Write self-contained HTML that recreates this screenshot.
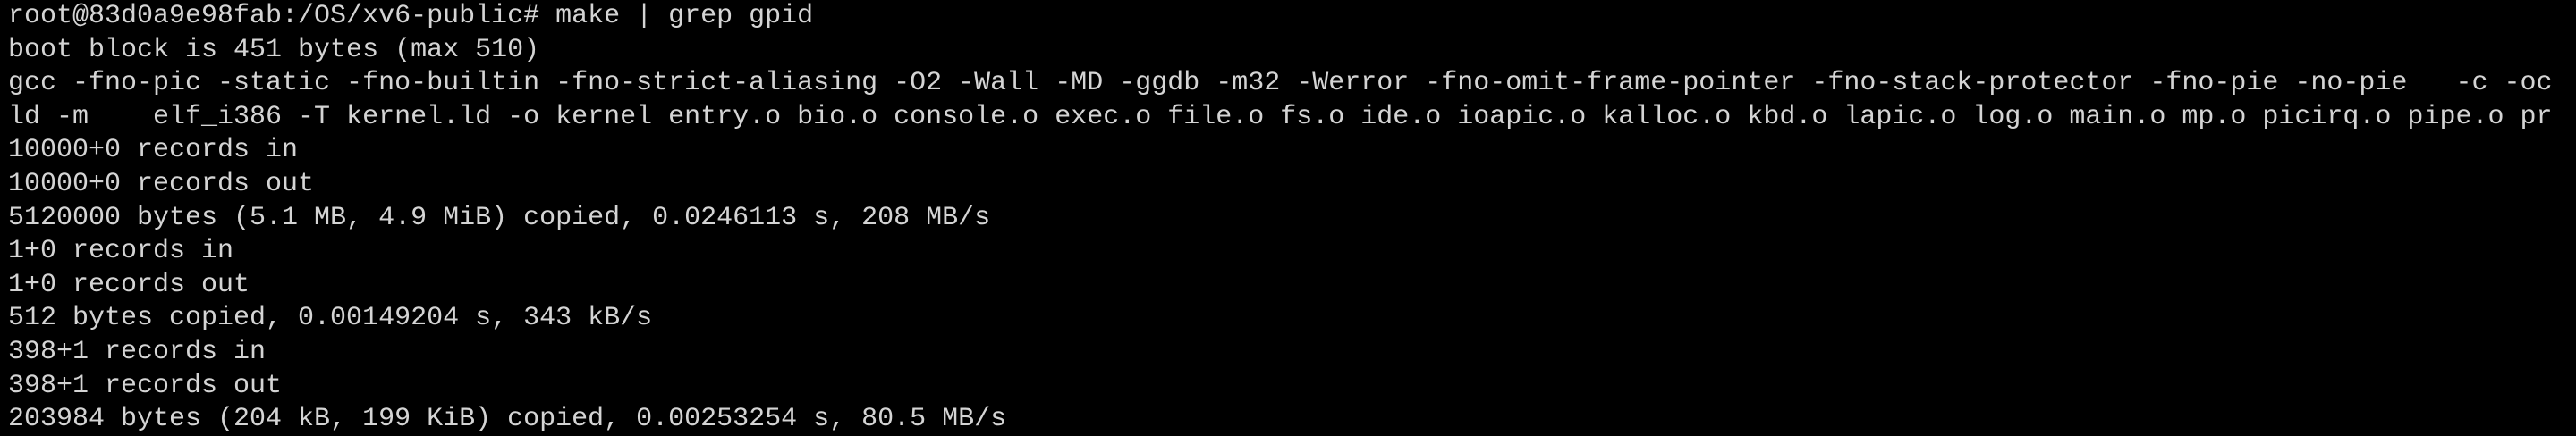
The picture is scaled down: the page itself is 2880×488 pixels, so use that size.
<!DOCTYPE html>
<html><head><meta charset="utf-8"><style>
html,body{margin:0;padding:0;background:#000;width:2880px;height:488px;overflow:hidden}
pre{margin:0;padding:0 0 0 9px;font-family:"Liberation Mono","DejaVu Sans Mono",monospace;font-size:30px;line-height:37.6px;color:#d4d4d4;white-space:pre}
</style></head><body><pre>root@83d0a9e98fab:/OS/xv6-public# make | grep gpid
boot block is 451 bytes (max 510)
gcc -fno-pic -static -fno-builtin -fno-strict-aliasing -O2 -Wall -MD -ggdb -m32 -Werror -fno-omit-frame-pointer -fno-stack-protector -fno-pie -no-pie   -c -oc
ld -m    elf_i386 -T kernel.ld -o kernel entry.o bio.o console.o exec.o file.o fs.o ide.o ioapic.o kalloc.o kbd.o lapic.o log.o main.o mp.o picirq.o pipe.o pr
10000+0 records in
10000+0 records out
5120000 bytes (5.1 MB, 4.9 MiB) copied, 0.0246113 s, 208 MB/s
1+0 records in
1+0 records out
512 bytes copied, 0.00149204 s, 343 kB/s
398+1 records in
398+1 records out
203984 bytes (204 kB, 199 KiB) copied, 0.00253254 s, 80.5 MB/s</pre></body></html>
